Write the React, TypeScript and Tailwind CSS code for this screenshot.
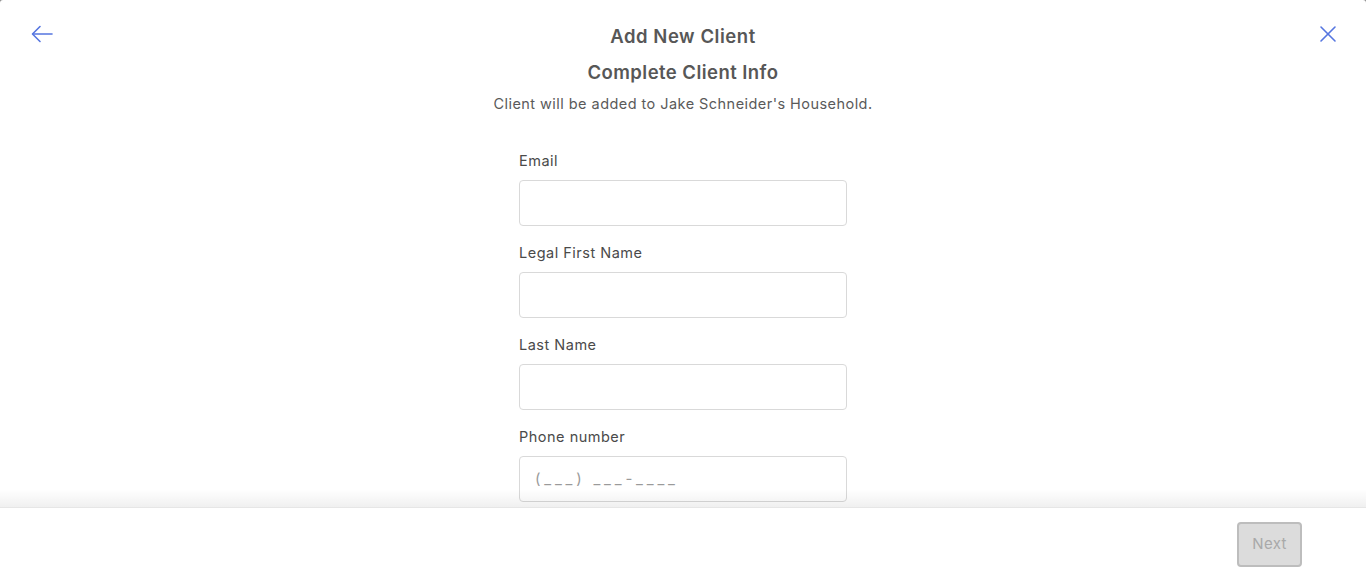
import React from "react";

function Field({ label, placeholder }: { label: string; placeholder?: string }) {
  return (
    <div className="flex flex-col">
      <label className="text-[14.5px] leading-[20px] tracking-[0.5px] text-[#4a4a4a] h-[20px]">{label}</label>
      <div className="mt-[9px] h-[46px] w-[328px] rounded-[4px] border border-[#d9d9d9] bg-white flex items-center pl-[15px]">
        {placeholder ? (
          <span className="text-[15px] text-[#9a9a9a] tracking-[3.8px]">{placeholder}</span>
        ) : null}
      </div>
    </div>
  );
}

export default function App() {
  return (
    <div
      className="w-[1366px] h-[581px] bg-[#8a8a8a] overflow-hidden"
      style={{ fontFamily: "Inter, 'Noto Sans', sans-serif" }}
    >
      <div className="w-full h-full bg-white rounded-t-[3px] flex flex-col overflow-hidden">
        <div className="relative h-[507px] overflow-hidden flex flex-col items-center">
          <button className="absolute left-[30px] top-[24px] text-[#5676e0]">
            <svg width="24" height="20" viewBox="0 0 24 20" fill="none" stroke="currentColor" strokeWidth="1.6" strokeLinecap="round" strokeLinejoin="round">
              <path d="M22 10H3" />
              <path d="M10 2.5L2.5 10L10 17.5" />
            </svg>
          </button>
          <button className="absolute left-[1319px] top-[25px] text-[#5676e0]">
            <svg width="18" height="18" viewBox="0 0 18 18" fill="none" stroke="currentColor" strokeWidth="1.6" strokeLinecap="round">
              <path d="M2 2L16 16" />
              <path d="M16 2L2 16" />
            </svg>
          </button>
          <h1 className="mt-[24px] text-[18.5px] leading-[24px] tracking-[0.55px] font-semibold text-[#575757]">Add New Client</h1>
          <h2 className="mt-[12px] text-[18.5px] leading-[24px] tracking-[0.45px] font-semibold text-[#575757]">Complete Client Info</h2>
          <p className="mt-[11px] text-[14.5px] leading-[18px] tracking-[0.45px] text-[#5a5a5a]">
            Client will be added to Jake Schneider's Household.
          </p>
          <div className="mt-[38px] flex flex-col gap-[17px]">
            <Field label="Email" />
            <Field label="Legal First Name" />
            <Field label="Last Name" />
            <Field label="Phone number" placeholder="(___) ___-____" />
          </div>
          <div className="absolute left-0 right-0 bottom-0 h-[18px] bg-gradient-to-b from-[rgba(0,0,0,0)] to-[rgba(0,0,0,0.06)] pointer-events-none" />
        </div>
        <div className="h-[74px] border-t border-[#e6e6e6] bg-white flex items-center justify-end pr-[64px]">
          <button className="w-[65px] h-[45px] rounded-[4px] border-2 border-[#bdbdbd] bg-[#dcdcdc] text-[15px] tracking-[0.3px] text-[#a9a9a9]">
            Next
          </button>
        </div>
      </div>
    </div>
  );
}
